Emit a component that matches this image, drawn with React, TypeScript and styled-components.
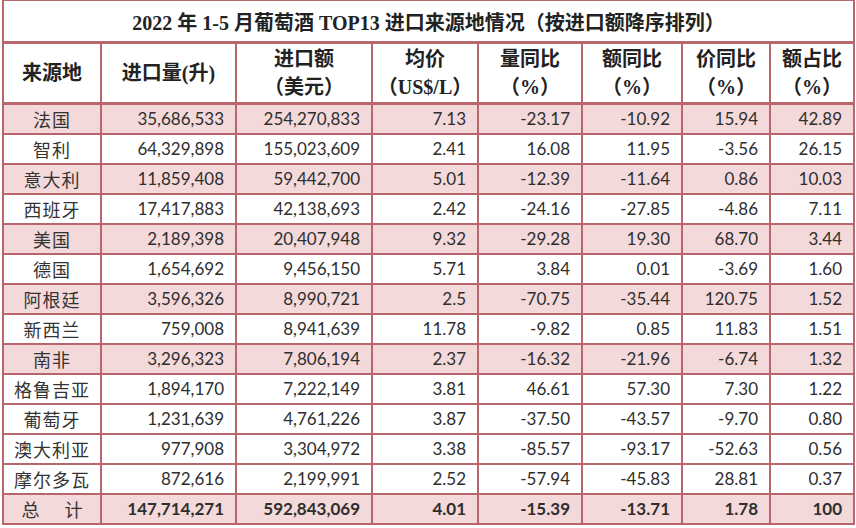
import React from "react";
import styled, { createGlobalStyle } from "styled-components";

const GlobalStyle = createGlobalStyle`
	html, body {
		margin: 0;
		padding: 0;
		background: #ffffff;
	}
`;

const border = "#b8666b";
const shade = "#f3d9da";

const Page = styled.div`
	width: 856px;
	height: 528px;
	padding: 0 0 0 2px;
	box-sizing: border-box;
	background: #fff;
`;

const Table = styled.table`
	border-collapse: collapse;
	table-layout: fixed;
	width: 851px;
	color: #2b2b2b;
`;

const TitleCell = styled.th`
	height: 40px;
	padding: 0;
	border: 2px solid ${border};
	border-top-width: 1px;
	border-bottom-width: 3px;
	font-family: "Liberation Serif", "Noto Sans CJK SC", serif;
	font-size: 20px;
	font-weight: 700;
	text-align: center;
	color: #222;
`;

const HeadCell = styled.th`
	height: 58px;
	padding: 0;
	border: 2px solid ${border};
	border-bottom-width: 3px;
	font-family: "Liberation Serif", "Noto Sans CJK SC", serif;
	font-size: 20px;
	font-weight: 700;
	line-height: 28px;
	text-align: center;
	vertical-align: middle;
	color: #222;
`;

const Row = styled.tr<{ $shaded?: boolean }>`
	height: 30px;
	background: ${(p) => (p.$shaded ? shade : "#fff")};
`;

const NameCell = styled.td`
	padding: 0;
	border: 2px solid ${border};
	font-family: "Noto Sans CJK SC", sans-serif;
	font-size: 18px;
	letter-spacing: 1px;
	text-align: center;
	color: #333;
	line-height: 26px;
`;

const NumCell = styled.td<{ $bold?: boolean }>`
	padding: 0 11px 0 0;
	border: 2px solid ${border};
	font-family: Lato, "Open Sans", sans-serif;
	font-size: 17px;
	font-weight: ${(p) => (p.$bold ? 700 : 400)};
	text-align: right;
	color: #2e2e2e;
	line-height: 26px;
`;

const TotalLabel = styled.span`
	letter-spacing: 25px;
	margin-right: -25px;
`;

const widths = [98, 135, 136, 106, 104, 100, 88, 84];

const headers = [
	["来源地"],
	["进口量(升)"],
	["进口额", "（美元）"],
	["均价", "（US$/L）"],
	["量同比", "（%）"],
	["额同比", "（%）"],
	["价同比", "（%）"],
	["额占比", "（%）"],
];

type RowData = [string, string, string, string, string, string, string, string, boolean];

const rows: RowData[] = [
	["法国", "35,686,533", "254,270,833", "7.13", "-23.17", "-10.92", "15.94", "42.89", true],
	["智利", "64,329,898", "155,023,609", "2.41", "16.08", "11.95", "-3.56", "26.15", false],
	["意大利", "11,859,408", "59,442,700", "5.01", "-12.39", "-11.64", "0.86", "10.03", true],
	["西班牙", "17,417,883", "42,138,693", "2.42", "-24.16", "-27.85", "-4.86", "7.11", false],
	["美国", "2,189,398", "20,407,948", "9.32", "-29.28", "19.30", "68.70", "3.44", true],
	["德国", "1,654,692", "9,456,150", "5.71", "3.84", "0.01", "-3.69", "1.60", false],
	["阿根廷", "3,596,326", "8,990,721", "2.5", "-70.75", "-35.44", "120.75", "1.52", true],
	["新西兰", "759,008", "8,941,639", "11.78", "-9.82", "0.85", "11.83", "1.51", false],
	["南非", "3,296,323", "7,806,194", "2.37", "-16.32", "-21.96", "-6.74", "1.32", true],
	["格鲁吉亚", "1,894,170", "7,222,149", "3.81", "46.61", "57.30", "7.30", "1.22", false],
	["葡萄牙", "1,231,639", "4,761,226", "3.87", "-37.50", "-43.57", "-9.70", "0.80", false],
	["澳大利亚", "977,908", "3,304,972", "3.38", "-85.57", "-93.17", "-52.63", "0.56", false],
	["摩尔多瓦", "872,616", "2,199,991", "2.52", "-57.94", "-45.83", "28.81", "0.37", false],
];

const total = ["147,714,271", "592,843,069", "4.01", "-15.39", "-13.71", "1.78", "100"];

export default function App() {
	return (
		<Page>
			<GlobalStyle />
			<Table>
				<colgroup>
					{widths.map((w, i) => (
						<col key={i} style={{ width: w }} />
					))}
				</colgroup>
				<thead>
					<tr>
						<TitleCell colSpan={8}>2022 年 1-5 月葡萄酒 TOP13 进口来源地情况（按进口额降序排列）</TitleCell>
					</tr>
					<tr>
						{headers.map((h, i) => (
							<HeadCell key={i}>
								{h.map((line, j) => (
									<div key={j}>{line}</div>
								))}
							</HeadCell>
						))}
					</tr>
				</thead>
				<tbody>
					{rows.map((r) => (
						<Row key={r[0]} $shaded={r[8]}>
							<NameCell>{r[0]}</NameCell>
							{r.slice(1, 8).map((v, i) => (
								<NumCell key={i}>{v as string}</NumCell>
							))}
						</Row>
					))}
					<Row $shaded>
						<NameCell>
							<TotalLabel>总计</TotalLabel>
						</NameCell>
						{total.map((v, i) => (
							<NumCell key={i} $bold>
								{v}
							</NumCell>
						))}
					</Row>
				</tbody>
			</Table>
		</Page>
	);
}
